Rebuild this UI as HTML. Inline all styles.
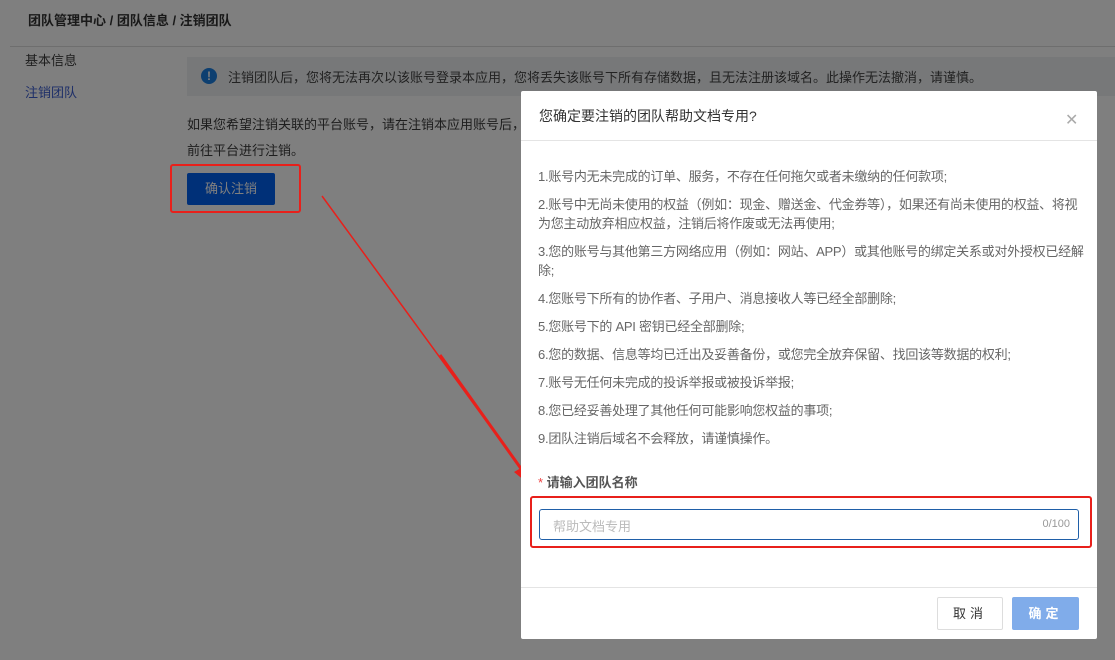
<!DOCTYPE html>
<html><head><meta charset="utf-8"><style>
*{margin:0;padding:0;box-sizing:border-box}
html,body{background:#fff}
body{width:1115px;height:660px;overflow:hidden;position:relative;font-family:"Liberation Sans","Noto Sans CJK SC",sans-serif;font-size:13px;color:#3c3c3c}
.abs{position:absolute}
.bc{left:28px;top:10px;font-size:13px;font-weight:bold;color:#333}
.hl{left:10px;top:46px;width:1105px;height:1px;background:#ddd}
.alert{left:187px;top:57px;width:928px;height:39px;background:#eef0f2}
.alert .ic{position:absolute;left:14px;top:11px;width:16px;height:16px;border-radius:50%;background:#1a7ee0;color:#fff;font-size:12px;font-weight:bold;text-align:center;line-height:16px}
.alert span{position:absolute;left:41px;top:10px;color:#444;white-space:nowrap}
.ov{left:0;top:0;width:1115px;height:660px;background:rgba(0,0,0,.5)}
.modal{left:521px;top:91px;width:576px;height:548px;background:#fff;border-radius:2px}
.mt{position:absolute;left:18px;top:15px;font-size:14px;color:#333}
.x{position:absolute;left:544px;top:19px;font-size:16px;color:#aaa}
.d1{position:absolute;left:0;top:49px;width:576px;height:1px;background:#e4e4e4}
.body{position:absolute;left:17px;top:76px;width:550px;color:#666;font-size:13px;line-height:19px;letter-spacing:-0.25px}
.body p{margin-bottom:9px;white-space:nowrap}
.lab{position:absolute;left:17px;top:381px;font-weight:bold;color:#555}
.lab b{color:#e44;font-weight:normal}
.inp{position:absolute;left:18px;top:418px;width:540px;height:31px;border:1px solid #1f5fa8;border-radius:3px}
.inp .ph{position:absolute;left:13px;top:6px;color:#bbb}
.inp .cnt{position:absolute;right:8px;top:8px;color:#999;font-size:11px}
.d2{position:absolute;left:0;top:496px;width:576px;height:1px;background:#e4e4e4}
.b1{position:absolute;left:416px;top:506px;width:66px;height:33px;border:1px solid #ddd;border-radius:2px;text-align:center;line-height:31px;color:#333;letter-spacing:4px}
.b2{position:absolute;left:491px;top:506px;width:67px;height:33px;background:#80acea;border-radius:2px;text-align:center;line-height:33px;color:#fff;font-weight:bold;letter-spacing:4px}
.red{border:2.5px solid #e8201b;border-radius:3px}
</style></head><body>
<div class="abs bc">团队管理中心 / 团队信息 / 注销团队</div>
<div class="abs hl"></div>
<div class="abs" style="left:25px;top:50px;color:#3c3c3c">基本信息</div>
<div class="abs" style="left:25px;top:82px;color:#3c5ed0">注销团队</div>
<div class="abs alert"><div class="ic">!</div><span>注销团队后，您将无法再次以该账号登录本应用，您将丢失该账号下所有存储数据，且无法注册该域名。此操作无法撤消，请谨慎。</span></div>
<div class="abs" style="left:187px;top:112px;line-height:26px">如果您希望注销关联的平台账号，请在注销本应用账号后，<br>前往平台进行注销。</div>
<div class="abs" style="left:187px;top:173px;width:88px;height:32px;background:#0060f0;border-radius:2px;color:#fff;text-align:center;line-height:32px">确认注销</div>
<div class="abs ov"></div>
<div class="abs red" style="left:170px;top:164px;width:131px;height:49px"></div>
<svg class="abs" style="left:0;top:0" width="1115" height="660"><line x1="322" y1="196" x2="522" y2="470" stroke="#e8201b" stroke-width="1.5"/><line x1="440" y1="355" x2="522" y2="470" stroke="#e8201b" stroke-width="3"/><polygon points="531,486 514,472 528,464" fill="#e8201b"/></svg>
<div class="abs modal">
<div class="mt">您确定要注销的团队帮助文档专用?</div>
<div class="x">✕</div>
<div class="d1"></div>
<div class="body">
<p>1.账号内无未完成的订单、服务，不存在任何拖欠或者未缴纳的任何款项;</p>
<p>2.账号中无尚未使用的权益（例如：现金、赠送金、代金券等），如果还有尚未使用的权益、将视<br>为您主动放弃相应权益，注销后将作废或无法再使用;</p>
<p>3.您的账号与其他第三方网络应用（例如：网站、APP）或其他账号的绑定关系或对外授权已经解<br>除;</p>
<p>4.您账号下所有的协作者、子用户、消息接收人等已经全部删除;</p>
<p>5.您账号下的 API 密钥已经全部删除;</p>
<p>6.您的数据、信息等均已迁出及妥善备份，或您完全放弃保留、找回该等数据的权利;</p>
<p>7.账号无任何未完成的投诉举报或被投诉举报;</p>
<p>8.您已经妥善处理了其他任何可能影响您权益的事项;</p>
<p>9.团队注销后域名不会释放，请谨慎操作。</p>
</div>
<div class="lab"><b>*</b> 请输入团队名称</div>
<div class="inp"><span class="ph">帮助文档专用</span><span class="cnt">0/100</span></div>
<div class="d2"></div>
<div class="b1">取消</div>
<div class="b2">确定</div>
</div>
<div class="abs red" style="left:530px;top:496px;width:562px;height:52px"></div>
</body></html>
